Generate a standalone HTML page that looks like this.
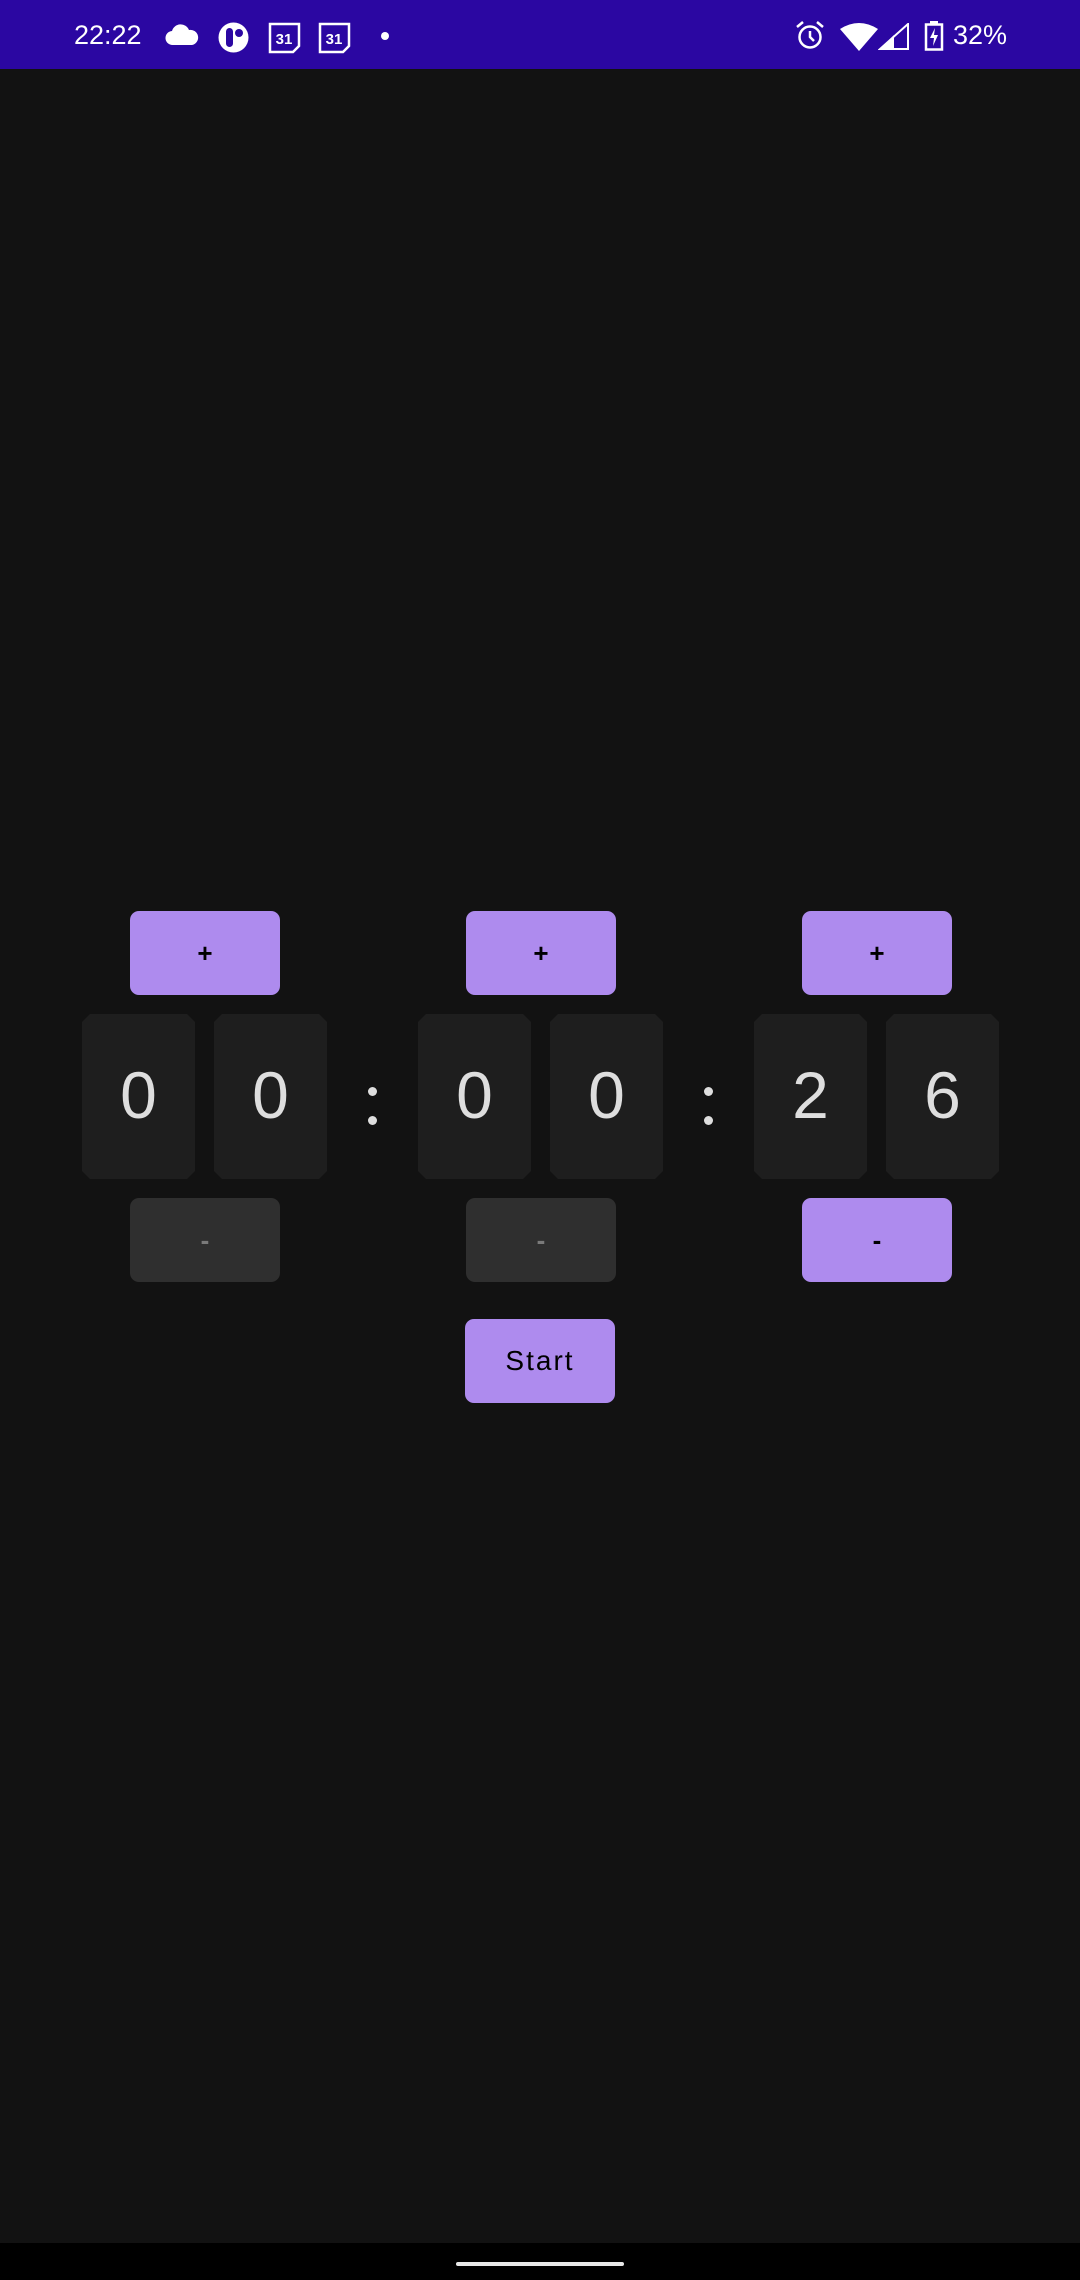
<!DOCTYPE html>
<html><head><meta charset="utf-8"><style>
*{margin:0;padding:0;box-sizing:border-box}
html,body{width:1080px;height:2280px;background:#121212;overflow:hidden;font-family:"Liberation Sans",Roboto,sans-serif}
.abs{position:absolute}
.sb{left:0;top:0;width:1080px;height:69px;background:#2b07a2}
.btn{position:absolute;width:150px;height:84px;border-radius:9px;background:#ae8bee;color:#000;display:flex;align-items:center;justify-content:center;font-size:26px;font-weight:bold}
.btn.dis{background:#2f2f2f;color:#7a7a7a}
.dg{position:absolute;top:1014px;width:113px;height:165px;background:#1e1e1e;clip-path:polygon(8px 0,105px 0,113px 8px,113px 157px,105px 165px,8px 165px,0 157px,0 8px);color:#dedede;font-size:66px;display:flex;align-items:center;justify-content:center;padding-bottom:4px}
.dot{position:absolute;width:9px;height:9px;border-radius:50%;background:#dedede}
</style></head><body>
<div class="abs sb"></div>
<div class="abs" style="left:74px;top:20px;color:#fff;font-size:27px;">22:22</div>
<svg class="abs" style="left:164px;top:24px" width="36" height="22" viewBox="0 0 36 22"><path d="M9 21a7 7 0 0 1-1-14 9 9 0 0 1 17-1 7 7 0 0 1 3 15z" fill="#fff"/></svg>
<svg class="abs" style="left:217px;top:22px" width="33" height="31" viewBox="0 0 33 31"><circle cx="16.5" cy="15.5" r="15" fill="#fff"/><rect x="9" y="6" width="7" height="19" rx="3.5" fill="#2b07a2"/><circle cx="22" cy="11" r="4" fill="#2b07a2"/></svg>
<svg class="abs" style="left:268px;top:22px" width="34" height="32" viewBox="0 0 34 32"><path d="M2 2h29v22l-6 6H2z" fill="none" stroke="#fff" stroke-width="2.5"/><text x="16" y="22" font-size="15" font-weight="bold" fill="#fff" text-anchor="middle" font-family="Liberation Sans">31</text></svg>
<svg class="abs" style="left:318px;top:22px" width="34" height="32" viewBox="0 0 34 32"><path d="M2 2h29v22l-6 6H2z" fill="none" stroke="#fff" stroke-width="2.5"/><text x="16" y="22" font-size="15" font-weight="bold" fill="#fff" text-anchor="middle" font-family="Liberation Sans">31</text></svg>
<div class="abs" style="left:381px;top:32px;width:8px;height:8px;border-radius:50%;background:#fff"></div>
<svg class="abs" style="left:795px;top:21px" width="30" height="29" viewBox="0 0 30 29"><circle cx="15" cy="16" r="10.5" fill="none" stroke="#fff" stroke-width="2.5"/><path d="M15 10v6l4 4" fill="none" stroke="#fff" stroke-width="2.5"/><path d="M2 6l6-5M28 6l-6-5" stroke="#fff" stroke-width="2.5"/></svg>
<svg class="abs" style="left:840px;top:23px" width="38" height="28" viewBox="0 0 38 28"><path d="M0 6Q19-6 38 6L19 28z" fill="#fff"/></svg>
<svg class="abs" style="left:878px;top:23px" width="31" height="27" viewBox="0 0 31 27"><path d="M30 1V26H2z" fill="none" stroke="#fff" stroke-width="2"/><path d="M16 12L2 26h14z" fill="#fff"/></svg>
<svg class="abs" style="left:924px;top:21px" width="20" height="30" viewBox="0 0 20 30"><rect x="6" y="0" width="8" height="4" fill="#fff"/><rect x="2" y="3.5" width="16" height="25" fill="none" stroke="#fff" stroke-width="2.5"/><path d="M11 7l-5 10h4l-1 8 5-11h-4z" fill="#fff"/></svg>
<div class="abs" style="left:953px;top:20px;color:#fff;font-size:27px;">32%</div>

<div class="btn" style="left:130px;top:911px">+</div>
<div class="btn" style="left:466px;top:911px">+</div>
<div class="btn" style="left:802px;top:911px">+</div>

<div class="dg" style="left:82px">0</div>
<div class="dg" style="left:214px">0</div>
<div class="dot" style="left:368px;top:1087px"></div><div class="dot" style="left:368px;top:1116px"></div>
<div class="dg" style="left:418px">0</div>
<div class="dg" style="left:550px">0</div>
<div class="dot" style="left:704px;top:1087px"></div><div class="dot" style="left:704px;top:1116px"></div>
<div class="dg" style="left:754px">2</div>
<div class="dg" style="left:886px">6</div>

<div class="btn dis" style="left:130px;top:1198px">-</div>
<div class="btn dis" style="left:466px;top:1198px">-</div>
<div class="btn" style="left:802px;top:1198px">-</div>

<div class="btn" style="left:465px;top:1319px;font-weight:normal;font-size:28px;letter-spacing:2px">Start</div>

<div class="abs" style="left:0;top:2243px;width:1080px;height:37px;background:#000"></div>
<div class="abs" style="left:456px;top:2262px;width:168px;height:4px;border-radius:2px;background:#e8e8e8"></div>
</body></html>
